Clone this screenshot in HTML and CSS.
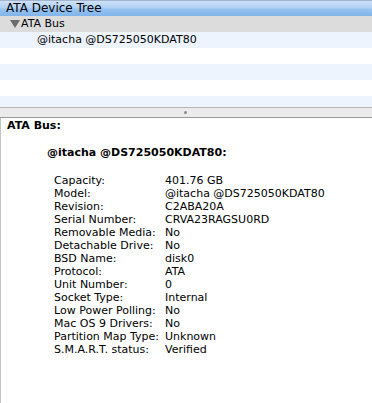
FILE: index.html
```html
<!DOCTYPE html>
<html lang="en">
<head>
  <meta charset="UTF-8">
  <title>ATA Device Tree</title>
  <link rel="stylesheet" href="styles.css">
</head>
<body>
  <div class="tree">
    <div class="tree-head">ATA Device Tree</div>
    <div class="row group"><span class="disclosure"></span>ATA Bus</div>
    <div class="row alt item">@itacha @DS725050KDAT80</div>
    <div class="row"></div>
    <div class="row alt"></div>
    <div class="row"></div>
    <div class="row alt"></div>
  </div>
  <div class="splitter"></div>
  <div class="detail">
    <div class="bus">ATA Bus:</div>
    <div class="device">@itacha @DS725050KDAT80:</div>
    <div class="props">
      <span>Capacity:</span><span>401.76 GB</span>
      <span>Model:</span><span>@itacha @DS725050KDAT80</span>
      <span>Revision:</span><span>C2ABA20A</span>
      <span>Serial Number:</span><span>CRVA23RAGSU0RD</span>
      <span>Removable Media:</span><span>No</span>
      <span>Detachable Drive:</span><span>No</span>
      <span>BSD Name:</span><span>disk0</span>
      <span>Protocol:</span><span>ATA</span>
      <span>Unit Number:</span><span>0</span>
      <span>Socket Type:</span><span>Internal</span>
      <span>Low Power Polling:</span><span>No</span>
      <span>Mac OS 9 Drivers:</span><span>No</span>
      <span>Partition Map Type:</span><span>Unknown</span>
      <span>S.M.A.R.T. status:</span><span>Verified</span>
    </div>
  </div>
</body>
</html>
```

FILE: styles.css
```css
html, body { margin: 0; height: 100%; }
body { font-family: "DejaVu Sans", sans-serif; font-size: 11px; color: #000; background: #fff; display: flex; flex-direction: column; width: 372px; height: 403px; overflow: hidden; }

.tree { height: 107px; overflow: hidden; flex: none; }
.tree-head { height: 15px; line-height: 15px; padding-left: 6px; border-top: 1px solid #a4b3cf; background: linear-gradient(#cde1f7, #b1d1f4 45%, #97c2f0 55%, #7fb4ec); font-size: 12px; }
.row { height: 16px; line-height: 16px; background: #fff; }
.row.alt { background: #edf4fe; }
.row.group { background: #dcdcdc; padding-left: 10px; display: flex; align-items: center; }
.row.item { padding-left: 37px; }
.disclosure { width: 0; height: 0; border-left: 5px solid transparent; border-right: 5px solid transparent; border-top: 8px solid #6c6c6c; margin-right: 1px; }

.splitter { height: 9px; flex: none; background: #ebebeb; border-top: 1px solid #b6b6b6; border-bottom: 1px solid #9a9a9a; position: relative; }
.splitter::after { content: ""; position: absolute; left: 184px; top: 3px; width: 3px; height: 3px; border-radius: 50%; background: #8a8a8a; }

.detail { flex: 1; border-left: 1px solid #c4c4c4; padding: 1px 0 0 6px; line-height: 13px; }
.bus { font-weight: bold; }
.device { font-weight: bold; margin: 14px 0 0 40px; }
.props { display: grid; grid-template-columns: 111px auto; margin: 15px 0 0 47px; }
```
